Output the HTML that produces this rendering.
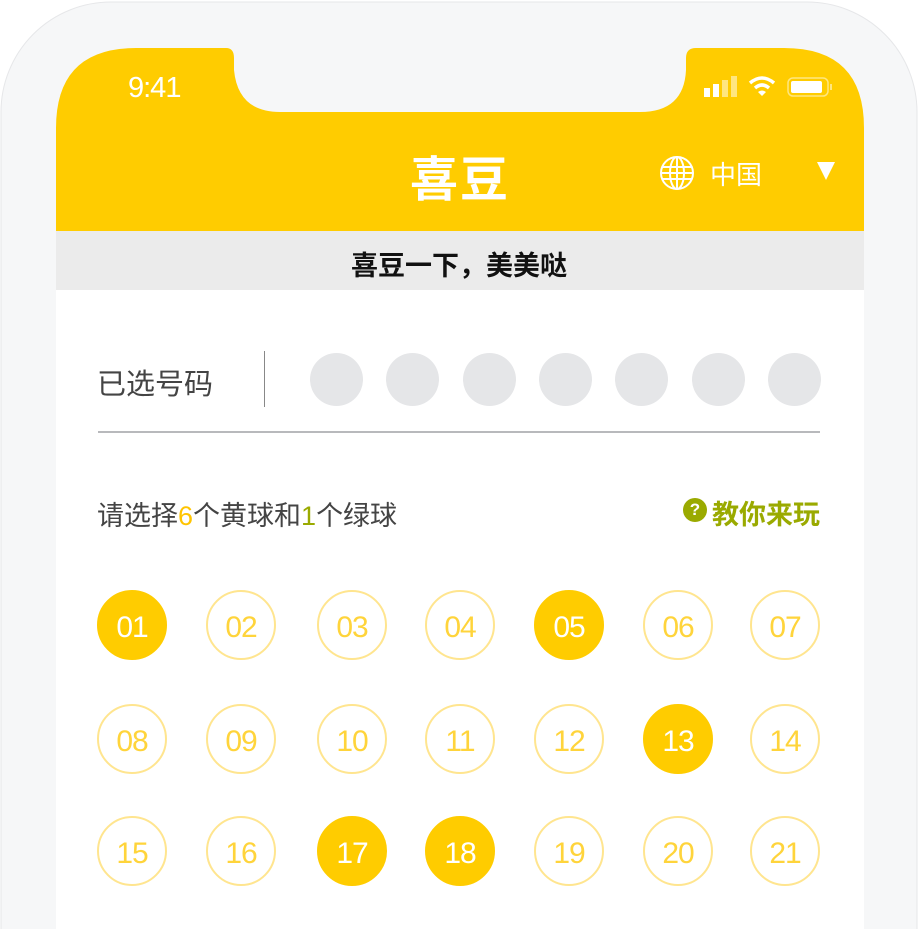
<!DOCTYPE html>
<html><head><meta charset="utf-8"><style>
*{margin:0;padding:0;box-sizing:border-box}
html,body{width:918px;height:929px;overflow:hidden}
body{background:#fff;position:relative;font-family:"Liberation Sans","Noto Sans CJK SC",sans-serif}
.a{position:absolute}
.ball{position:absolute;width:70px;height:70px;border-radius:50%;border:2px solid #FFE58F;color:#FFD43B;font-family:"Liberation Sans Narrow","Liberation Sans",sans-serif;font-size:30px;line-height:71px;text-align:center;letter-spacing:-1px}
.ball.on{background:#FFCC00;border-color:#FFCC00;color:#fff}
.dot{position:absolute;top:353px;width:53px;height:53px;border-radius:50%;background:#E5E6E8}
</style></head><body>
<svg class="a" style="left:0;top:0" width="918" height="929">
<rect x="1" y="2" width="916" height="1100" rx="110" fill="#F6F7F8" stroke="#E6E7E9"/>
<rect x="56" y="48" width="808" height="1000" rx="78" fill="#fff"/>
<rect x="226" y="46" width="470" height="70" fill="#F6F7F8"/>
<path d="M56 231 L56 128 Q56 48 136 48 L226 48 Q234 48 234 58 L234 70 Q238 112 280 112 L640 112 Q684 112 686 70 L686 58 Q686 48 696 48 L784 48 Q864 48 864 128 L864 231 Z" fill="#FFCC00"/>
<rect x="56" y="231" width="808" height="59" fill="#EBEBEB"/>
</svg>
<div class="a" style="left:128px;top:72px;color:#fff;font-size:29px;letter-spacing:-1px">9:41</div>
<svg class="a" style="left:700px;top:74px" width="140" height="26">
<rect x="4" y="14" width="6" height="9" fill="#fff"/><rect x="13" y="10" width="6" height="13" fill="#fff"/>
<rect x="22" y="6" width="6" height="17" fill="#FFE680"/><rect x="31" y="2" width="6" height="21" fill="#FFE680"/>
<path d="M50 9 Q62 -1 74 9" stroke="#fff" stroke-width="3.5" fill="none"/><path d="M55 14 Q62 8 69 14" stroke="#fff" stroke-width="3.5" fill="none"/><path d="M58 18 L62 22 L66 18 Q62 15 58 18Z" fill="#fff"/>
<rect x="88" y="4" width="40" height="18" rx="5" fill="none" stroke="#FFE680" stroke-width="1.5"/><rect x="91" y="7" width="31" height="12" rx="2" fill="#fff"/><rect x="130" y="10" width="2" height="6" fill="#FFE680"/>
</svg>
<div class="a" style="left:410px;top:140px;color:#fff;font-size:48px;font-weight:bold;letter-spacing:2px">喜豆</div>
<svg class="a" style="left:659px;top:155px" width="36" height="36"><g stroke="#fff" stroke-width="2" fill="none"><circle cx="18" cy="18" r="16"/><ellipse cx="18" cy="18" rx="7" ry="16"/><line x1="18" y1="2" x2="18" y2="34"/><line x1="3" y1="12" x2="33" y2="12"/><line x1="2" y1="18" x2="34" y2="18"/><line x1="3" y1="24" x2="33" y2="24"/></g></svg>
<div class="a" style="left:710px;top:155px;color:#fff;font-size:26px">中国</div>
<div class="a" style="left:817px;top:162px;width:0;height:0;border-left:9px solid transparent;border-right:9px solid transparent;border-top:18px solid #fff"></div>
<div class="a" style="left:0;width:918px;top:244px;text-align:center;font-size:27px;font-weight:bold;color:#111">喜豆一下，美美哒</div>
<div class="a" style="left:97px;top:361px;font-size:29px;color:#444">已选号码</div>
<div class="a" style="left:264px;top:351px;width:1px;height:56px;background:#888"></div>
<div class="dot" style="left:310px"></div><div class="dot" style="left:386px"></div><div class="dot" style="left:463px"></div><div class="dot" style="left:539px"></div><div class="dot" style="left:615px"></div><div class="dot" style="left:692px"></div><div class="dot" style="left:768px"></div>
<div class="a" style="left:98px;top:431px;width:722px;height:2px;background:#B8B9BC"></div>
<div class="a" style="left:97px;top:494px;font-size:27px;color:#444">请选择<span style="color:#FFC400">6</span>个黄球和<span style="color:#9AAA00">1</span>个绿球</div>
<div class="a" style="left:683px;top:498px;width:24px;height:24px;border-radius:50%;background:#9AAA00;color:#fff;font-size:17px;font-weight:bold;text-align:center;line-height:24px">?</div>
<div class="a" style="left:712px;top:493px;font-size:27px;color:#9AAA00;font-weight:bold">教你来玩</div>
<div class="ball on" style="left:97px;top:590px">01</div><div class="ball" style="left:206px;top:590px">02</div><div class="ball" style="left:317px;top:590px">03</div><div class="ball" style="left:425px;top:590px">04</div><div class="ball on" style="left:534px;top:590px">05</div><div class="ball" style="left:643px;top:590px">06</div><div class="ball" style="left:750px;top:590px">07</div>
<div class="ball" style="left:97px;top:704px">08</div><div class="ball" style="left:206px;top:704px">09</div><div class="ball" style="left:317px;top:704px">10</div><div class="ball" style="left:425px;top:704px">11</div><div class="ball" style="left:534px;top:704px">12</div><div class="ball on" style="left:643px;top:704px">13</div><div class="ball" style="left:750px;top:704px">14</div>
<div class="ball" style="left:97px;top:816px">15</div><div class="ball" style="left:206px;top:816px">16</div><div class="ball on" style="left:317px;top:816px">17</div><div class="ball on" style="left:425px;top:816px">18</div><div class="ball" style="left:534px;top:816px">19</div><div class="ball" style="left:643px;top:816px">20</div><div class="ball" style="left:750px;top:816px">21</div>
</body></html>
